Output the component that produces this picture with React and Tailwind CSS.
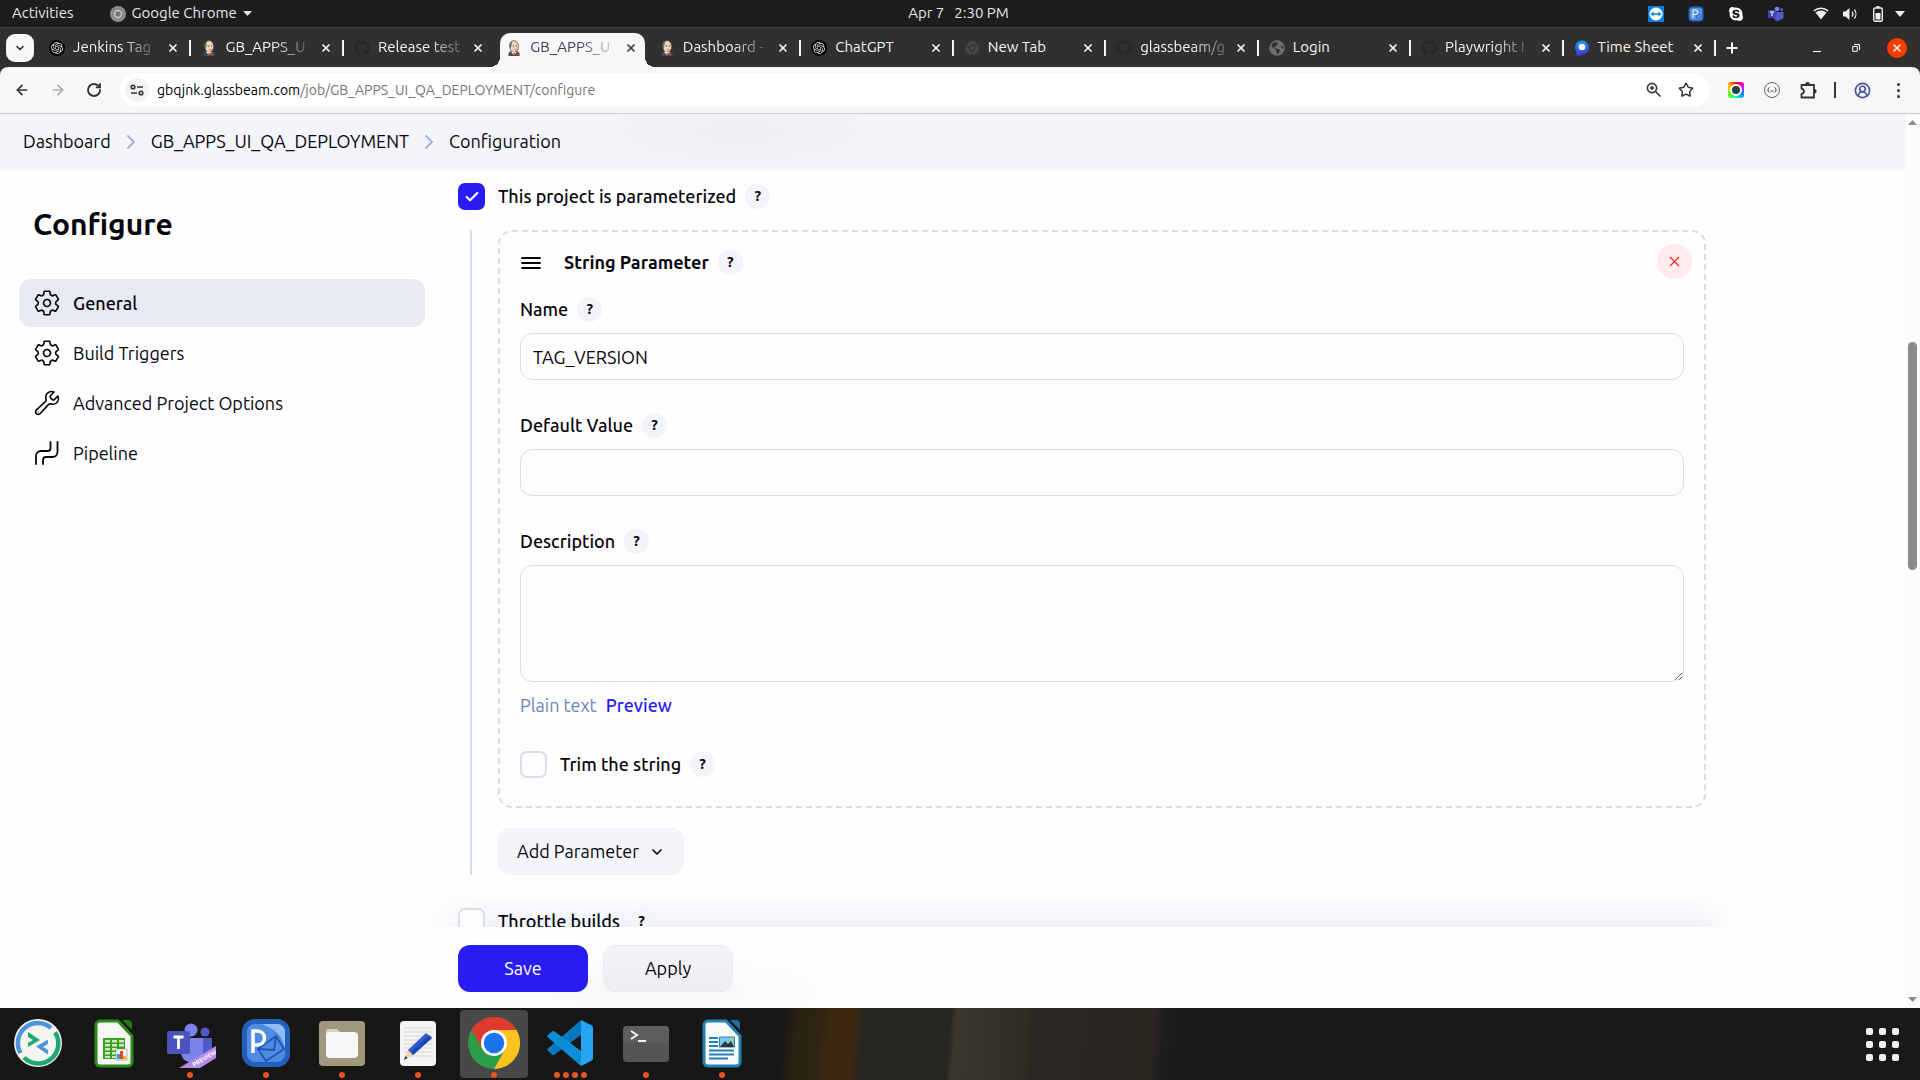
import React from "react";
import { SiOpenai } from "react-icons/si";
import { FaGithub, FaChrome, FaGlobeAmericas, FaSkype } from "react-icons/fa";
import { ArrowLeft, ArrowRight, RotateCw, Check, ChevronDown, X, Star, Plus, CircleUserRound } from "lucide-react";

const FONT = "font-['Ubuntu','Noto_Sans',sans-serif]";

function Henry() {
  return (
    <svg viewBox="0 0 16 16" className="size-4">
      <path d="M2.500 16v-3l2.500-2h6l2.500 2v3z" fill="#335061" />
      <ellipse cx="8.200" cy="6.500" rx="4.400" ry="5.900" fill="#efd3b3" stroke="#4a4340" strokeWidth=".7" />
      <path d="M4.200 8.500C2.600 5 3.600 1.600 6.500 .8 5.800 2 5.400 3.600 5.600 5.200c-.3 1-.6 2-1.400 3.300z" fill="#6d6a68" />
      <path d="M6.800 6h1.300M9.800 6h1.200" stroke="#3b3532" strokeWidth=".9" />
      <path d="M8.300 9.600c.9.600 1.800.5 2.500 0" stroke="#8a4a34" strokeWidth=".7" fill="none" />
      <path d="M5 11.800l2.500 3h1.500l2-2.300z" fill="#fff" />
      <path d="M7.500 12.500l2 1 2.300-1.200v3.500l-2.300-1-2 1z" fill="#d33833" />
    </svg>
  );
}

const favicons = {
  gpt: (
    <span className="grid size-4 place-items-center rounded-full bg-black">
      <SiOpenai className="size-3 text-gray-200" />
    </span>
  ),
  henry: <Henry />,
  github: <FaGithub className="size-4 text-[#24292e]" />,
  chrome: <FaChrome className="size-[14px] text-[#43474b]" />,
  globe: <FaGlobeAmericas className="size-4 text-[#6b6e74]" />,
  sheet: (
    <svg viewBox="0 0 16 16" className="size-4">
      <defs>
        <linearGradient id="sheet" x1="0" y1="0" x2="0" y2="1">
          <stop offset="0" stopColor="#13a0ea" />
          <stop offset="1" stopColor="#3a33d6" />
        </linearGradient>
      </defs>
      <path d="M8 .5a7 7 0 0 1 0 14c-1.500 1.300-4.500 1.300-6.200 1 .8-1 1-2.300.4-4A7 7 0 0 1 8 .5z" fill="url(#sheet)" />
      <circle cx="8" cy="7" r="3.300" fill="#fff" />
    </svg>
  ),
};

const tabs = [
  { icon: "gpt", title: "Jenkins Tag", fade: true },
  { icon: "henry", title: "GB_APPS_U", fade: true },
  { icon: "github", title: "Release test", fade: true },
  { icon: "henry", title: "GB_APPS_U", fade: true },
  { icon: "henry", title: "Dashboard -", fade: true },
  { icon: "gpt", title: "ChatGPT" },
  { icon: "chrome", title: "New Tab" },
  { icon: "github", title: "glassbeam/g", fade: true },
  { icon: "globe", title: "Login" },
  { icon: "github", title: "Playwright I", fade: true },
  { icon: "sheet", title: "Time Sheet" },
];

function SystemBar() {
  return (
    <header className="flex h-7 shrink-0 items-center border-b border-[#444] bg-[#1d1d1d] text-[15px] text-gray-200">
      <div className="flex flex-1 items-center gap-9 pl-3">
        <button>Activities</button>
        <button className="flex items-center gap-[6px]">
          <span className="grid size-4 place-items-center rounded-full bg-[#8b8b8b]">
            <span className="size-2 rounded-full border border-gray-200 bg-[#777]" />
          </span>
          Google Chrome
          <svg viewBox="0 0 9 5" className="h-[5px] w-[9px]"><path d="M0 0h9L4.500 5z" fill="currentColor" /></svg>
        </button>
      </div>
      <div className="flex gap-[10px]"><span>Apr 7</span><span>2:30 PM</span></div>
      <div className="flex flex-1 items-center justify-end pr-[15px]">
        <svg viewBox="0 0 16 16" className="mr-6 size-4">
          <path d="M0 0h16v16H0z" fill="#0a7fe0" /><circle cx="8" cy="8" r="6.500" fill="#fff" />
          <path d="M2.500 8l3-2.500v1.700h5V5.500l3 2.500-3 2.500V8.800h-5v1.700z" fill="#0a7fe0" />
        </svg>
        <svg viewBox="0 0 16 16" className="mr-6 size-4">
          <rect x=".5" y=".5" width="15" height="15" rx="4" fill="#2465bd" /><rect x="2" y="2" width="12" height="12" rx="3" fill="#5b93e2" />
          <path d="M5 12V4h2.500a2 2 0 0 1 0 4.500H5" stroke="#fff" fill="none" /><path d="M8 10l4-2 1.500 3-4 2z" fill="none" stroke="#2465bd" strokeWidth=".8" />
        </svg>
        <FaSkype className="mr-6 size-4 text-white" />
        <svg viewBox="0 0 16 16" className="mr-[29px] size-4">
          <circle cx="9" cy="3" r="2.300" fill="#7b83eb" /><circle cx="13.500" cy="3.700" r="1.600" fill="#5059c9" />
          <path d="M6 6h9.500v4.500a3 3 0 0 1-3 3c-3 3-6.500 1-6.500-2z" fill="#5059c9" /><rect y="4" width="8" height="8" rx="1" fill="#4048b0" />
          <path d="M2 6h4M4 6v4" stroke="#fff" />
        </svg>
        <svg viewBox="0 0 16 13" className="mr-[13px] h-[13px] w-4">
          <path d="M.8 4a11 11 0 0 1 14.400 0" fill="none" stroke="#eee" strokeWidth="1.500" /><path d="M2.500 5.500a9 9 0 0 1 11 0L8 12.500z" fill="#eee" />
        </svg>
        <svg viewBox="0 0 16 14" className="mr-[15px] h-[14px] w-4">
          <path d="M1 4.500h2.500L7.500 1v12l-4-3.500H1z" fill="#eee" /><path d="M10 4.500a4 4 0 0 1 0 5M12.300 2.500a7 7 0 0 1 0 9" fill="none" stroke="#eee" strokeWidth="1.200" />
        </svg>
        <svg viewBox="0 0 10 16" className="mr-3 h-4 w-[10px]">
          <path d="M3.500 0h3v2h-3z" fill="#eee" /><rect x=".7" y="2" width="8.600" height="13.200" rx="1.500" fill="none" stroke="#eee" strokeWidth="1.400" /><path d="M2.500 7h5v6.500h-5z" fill="#eee" />
        </svg>
        <svg viewBox="0 0 10 6" className="h-[6px] w-[10px]"><path d="M0 0h10L5 6z" fill="#eee" /></svg>
      </div>
    </header>
  );
}

function TabStrip() {
  return (
    <div className="flex h-[39px] shrink-0 items-center bg-[#32302f] text-[15px] text-gray-100">
      <button aria-label="Search tabs" className="ml-[6px] grid h-7 w-7 shrink-0 place-items-center rounded-[9px] bg-[#f7f7f7] text-gray-800">
        <ChevronDown className="size-3" strokeWidth={3} />
      </button>
      <div className="ml-[5px] flex h-full min-w-0 flex-1">
        {tabs.map(({ icon, title, fade }, i) => {
          const active = i === 3;
          return (
            <div key={i} className="relative flex h-full min-w-0 flex-1 items-center">
              {active && (
                <div className="absolute inset-x-1 top-[5px] bottom-0 rounded-t-[10px] bg-[#f7f7f7]">
                  <span className="absolute right-[-10px] bottom-0 size-[10px] bg-[radial-gradient(circle_at_100%_0,#32302f_10px,#f7f7f7_10px)]" />
                  <span className="absolute bottom-0 left-[-10px] size-[10px] bg-[radial-gradient(circle_at_0_0,#32302f_10px,#f7f7f7_10px)]" />
                </div>
              )}
              <span className="relative ml-[10px] grid size-4 shrink-0 place-items-center">{favicons[icon]}</span>
              <span className={`relative ml-2 whitespace-nowrap ${active ? "text-gray-700" : ""} ${fade ? "[mask-image:linear-gradient(to_right,black_60%,rgba(0,0,0,0.25))]" : ""}`}>{title}</span>
              <button aria-label={"Close " + title} className="relative mr-3 ml-auto">
                <X className={`size-3 ${active ? "text-gray-700" : "text-gray-100"}`} strokeWidth={3.500} />
              </button>
              {i !== 2 && !active && <span className="absolute right-0 h-4 w-[2px] bg-gray-100" />}
            </div>
          );
        })}
      </div>
      <div className="flex w-[204px] shrink-0 items-center pl-2">
        <button aria-label="New tab"><Plus className="size-4" strokeWidth={3} /></button>
        <button aria-label="Minimize" className="ml-[73px] flex h-4 w-2 items-end pb-[4px]"><span className="h-px w-2 bg-white" /></button>
        <button aria-label="Restore" className="ml-[31px]">
          <svg viewBox="0 0 8 8" className="size-2"><path d="M2 .5h5.500V6M.7 2.500h4.600v4.800H.7z" fill="none" stroke="#fff" /></svg>
        </button>
        <button aria-label="Close window" className="ml-[27px] grid size-5 place-items-center rounded-full bg-[#ff3c00]"><X className="size-3" strokeWidth={3} /></button>
      </div>
    </div>
  );
}

function Toolbar() {
  return (
    <div className="bg-[#32302f]">
      <div className="flex h-[47px] items-center rounded-t-lg border-b border-[#c3c8c0] bg-[#f7f7f7] text-[#333]">
        <button aria-label="Back" className="ml-[14px]"><ArrowLeft className="size-4" strokeWidth={2.500} /></button>
        <button aria-label="Forward" className="ml-5 text-[#aaa]"><ArrowRight className="size-4" strokeWidth={2.500} /></button>
        <button aria-label="Reload" className="ml-5"><RotateCw className="size-4" strokeWidth={2.800} /></button>
        <div className="ml-[18px] flex h-[34px] flex-1 items-center rounded-full bg-white">
          <button aria-label="Site information" className="ml-[5px] grid size-6 place-items-center rounded-full bg-[#f3f3f3]">
            <svg viewBox="0 0 14 12" className="h-3 w-[14px]" fill="none" stroke="#333" strokeWidth="1.600">
              <circle cx="3" cy="3" r="1.800" /><path d="M7 3h6M1 9h6" /><circle cx="11" cy="9" r="1.800" />
            </svg>
          </button>
          <p className="ml-2 flex-1 text-[14px]">
            <span className="text-black">gbqjnk.glassbeam.com</span><span className="text-[#757575]">/job/GB_APPS_UI_QA_DEPLOYMENT/configure</span>
          </p>
          <button aria-label="Zoom">
            <svg viewBox="0 0 16 16" className="size-4" fill="none" stroke="currentColor" strokeWidth="1.600">
              <circle cx="6" cy="6" r="4.600" /><path d="M9.500 9.500l5 5M6 4v4M4 6h4" />
            </svg>
          </button>
          <button aria-label="Bookmark" className="mr-4 ml-4"><Star className="size-4" strokeWidth={2.200} /></button>
        </div>
        <div className="flex w-[210px] items-center pl-[18px]">
          <button aria-label="Color extension" className="grid size-4 place-items-center rounded-[3px] bg-[conic-gradient(red,#f0f,#08f,#0fc,#6f0,#fc0,red)]">
            <span className="size-[12px] rounded-full border-2 border-white bg-[#24404a]" />
          </button>
          <button aria-label="JSON extension" className="ml-5 grid size-4 place-items-center rounded-full border border-[#666]">
            <svg viewBox="0 0 10 6" className="h-[6px] w-[10px]" fill="none" stroke="#444"><path d="M2.500 .5c-1.500 0-.5 2.500-2 2.500 1.500 0 .5 2.500 2 2.500M7.500 .5c1.500 0 .5 2.500 2 2.500-1.500 0-.5 2.500-2 2.500M3.500 4h3" /></svg>
          </button>
          <button aria-label="Extensions" className="ml-5">
            <svg viewBox="0 0 17 17" className="size-[17px]" fill="none" stroke="#333" strokeWidth="1.800" strokeLinejoin="round">
              <path d="M1.500 3h12.500v12.500H1.500v-3.700a2.500 2.500 0 0 0 0-5z" /><path d="M6 2.500a1.500 1.500 0 0 1 3 0zM14.500 8a1.200 1.200 0 0 1 0 2.500z" fill="#333" />
            </svg>
          </button>
          <span className="ml-[17px] h-4 w-[2px] bg-[#333]" />
          <button aria-label="Profile" className="ml-[18px] text-[#4c53a5]"><CircleUserRound className="size-[17px]" strokeWidth={2.400} /></button>
          <button aria-label="Menu" className="ml-[26px] flex flex-col gap-[3px]">
            <span className="size-[3px] rounded-full bg-[#333]" /><span className="size-[3px] rounded-full bg-[#333]" /><span className="size-[3px] rounded-full bg-[#333]" />
          </button>
        </div>
      </div>
    </div>
  );
}

function Gear() {
  return (
    <svg viewBox="0 0 512 512" className="size-7" fill="none" stroke="currentColor" strokeWidth="30" strokeLinecap="round" strokeLinejoin="round">
      <path d="M262.290 192.310a64 64 0 1 0 57.400 57.400 64.130 64.130 0 0 0-57.400-57.400zM416.390 256a154.340 154.340 0 0 1-1.530 20.790l45.210 35.460a10.810 10.810 0 0 1 2.450 13.750l-42.770 74a10.810 10.810 0 0 1-13.140 4.590l-44.900-18.080a16.110 16.110 0 0 0-15.170 1.750A164.480 164.480 0 0 1 325 400.800a15.940 15.940 0 0 0-8.820 12.140l-6.730 47.890a11.080 11.080 0 0 1-10.680 9.170h-85.540a11.110 11.110 0 0 1-10.690-8.870l-6.720-47.820a16.070 16.070 0 0 0-9-12.220 155.300 155.300 0 0 1-21.460-12.570 16 16 0 0 0-15.110-1.710l-44.890 18.070a10.810 10.810 0 0 1-13.140-4.580l-42.770-74a10.800 10.800 0 0 1 2.450-13.750l38.210-30a16.050 16.050 0 0 0 6-14.080c-.36-4.170-.58-8.330-.58-12.500s.21-8.270.58-12.350a16 16 0 0 0-6.070-13.940l-38.190-30A10.810 10.810 0 0 1 49.480 186l42.770-74a10.810 10.810 0 0 1 13.140-4.590l44.900 18.080a16.110 16.110 0 0 0 15.170-1.750A164.480 164.480 0 0 1 187 111.200a15.940 15.940 0 0 0 8.820-12.140l6.730-47.890A11.080 11.080 0 0 1 213.230 42h85.540a11.110 11.110 0 0 1 10.690 8.870l6.720 47.820a16.070 16.070 0 0 0 9 12.220 155.300 155.300 0 0 1 21.460 12.570 16 16 0 0 0 15.110 1.710l44.890-18.070a10.810 10.810 0 0 1 13.140 4.580l42.770 74a10.800 10.800 0 0 1-2.450 13.750l-38.210 30a16.050 16.050 0 0 0-6.050 14.080c.33 4.140.55 8.300.55 12.470z" />
    </svg>
  );
}

function Wrench() {
  return (
    <svg viewBox="0 0 512 512" className="size-7" fill="none" stroke="currentColor" strokeWidth="30" strokeLinecap="round" strokeLinejoin="round">
      <path d="M393.870 190a32.100 32.100 0 0 1-45.250 0l-26.570-26.570a32.090 32.090 0 0 1 0-45.260L382.190 58a1 1 0 0 0-.3-1.640c-38.820-16.640-89.150-8.160-121.110 23.570-30.580 30.350-32.320 76-21.120 115.840a31.930 31.930 0 0 1-9.060 32.080L64 380a48.170 48.170 0 1 0 68 68l153.860-167a31.930 31.930 0 0 1 31.600-9.130c39.540 10.590 84.540 8.600 114.720-21.190 32.490-32 39.500-88.560 23.750-120.930a1 1 0 0 0-1.600-.26z" />
      <circle cx="96" cy="416" r="10" fill="currentColor" stroke="none" />
    </svg>
  );
}

function PipelineIcon() {
  return (
    <svg viewBox="0 0 28 28" className="size-7" fill="none" stroke="currentColor" strokeWidth="1.800" strokeLinecap="round" strokeLinejoin="round">
      <path d="M17.500 3v6a3 3 0 0 1-3 3H8a5 5 0 0 0-5 5v8M24.500 3v10a5 5 0 0 1-5 5H13a3 3 0 0 0-3 3v4" />
    </svg>
  );
}

function Help({ topic }) {
  return (
    <button aria-label={"Help for " + topic} className="grid size-[25px] shrink-0 place-items-center rounded-full bg-[#f3f4f9] text-[15px] font-bold">?</button>
  );
}

function CheckField({ id, label, checked }) {
  return (
    <div className="flex items-center">
      <span className="grid size-[27px] shrink-0">
        <input id={id} type="checkbox" defaultChecked={checked} className="peer col-start-1 row-start-1 size-[27px] appearance-none rounded-[7px] border-2 border-[#d6deeb] bg-[#fdfdfe] checked:border-[#281bf4] checked:bg-[#281bf4]" />
        <Check className="pointer-events-none col-start-1 row-start-1 hidden size-4 place-self-center text-white peer-checked:block" strokeWidth={3.200} />
      </span>
      <label htmlFor={id} className="mr-[9px] ml-[13px] font-medium">{label}</label>
      <Help topic={label} />
    </div>
  );
}

function Field({ id, label, children }) {
  return (
    <div>
      <div className="mb-[11px] flex h-[25px] items-center gap-[9px]">
        <label htmlFor={id} className="font-medium">{label}</label>
        <Help topic={label} />
      </div>
      {children}
    </div>
  );
}

const inputStyle = "block w-full rounded-xl border border-[#d6deeb] bg-[#fdfdfd] px-3";

function Sidebar() {
  const items = [["General", Gear], ["Build Triggers", Gear], ["Advanced Project Options", Wrench], ["Pipeline", PipelineIcon]];
  return (
    <aside className="w-[425px] shrink-0 pl-[19px]">
      <h1 className="mt-[33px] pl-[14px] text-[30px] leading-[40px] font-bold">Configure</h1>
      <nav className="mt-[35px] flex flex-col gap-[2px]">
        {items.map(([name, Icon], i) => (
          <a key={name} href="#" className={`flex h-12 items-center gap-3 rounded-xl pl-[14px] ${i === 0 ? "bg-[#e7e9f3] font-medium" : ""}`}>
            <Icon />
            {name}
          </a>
        ))}
      </nav>
    </aside>
  );
}

function Crumb() {
  return (
    <svg viewBox="0 0 8 14" className="h-[14px] w-2" fill="none" stroke="#a0b2d8" strokeWidth="1.800" strokeLinecap="round" strokeLinejoin="round"><path d="M1 1l6 6-6 6" /></svg>
  );
}

function Page() {
  return (
    <div className="flex min-h-0 flex-1 bg-[#fefefe] text-[18px] text-[#07060f]">
      <div className="flex min-w-0 flex-1 flex-col">
        <nav className="flex h-[57px] shrink-0 items-center gap-4 bg-[#f4f5fa] bg-[radial-gradient(ellipse_170px_42px_at_740px_18px,#eeeff3,#f4f5fa)] pb-[2px] pl-[23px]">
          <a href="#">Dashboard</a>
          <Crumb />
          <a href="#">GB_APPS_UI_QA_DEPLOYMENT</a>
          <Crumb />
          <a href="#">Configuration</a>
        </nav>
        <div className="flex min-h-0 flex-1">
          <Sidebar />
          <main className="ml-[33px] flex min-w-0 max-w-[1248px] flex-1 flex-col">
            <div className="min-h-0 flex-1 overflow-hidden pt-3">
              <CheckField id="param" label="This project is parameterized" checked />
              <div className="mt-5 ml-3 border-l-2 border-[#d6deeb] pl-[26px]">
                <section className="relative rounded-[14px] border-2 border-dashed border-[#d6deeb] px-5 pb-7">
                  <div className="flex h-[61px] items-center">
                    <svg viewBox="0 0 20 14" className="mx-px h-[14px] w-5" stroke="currentColor" strokeWidth="1.800" strokeLinecap="round"><path d="M1 2h18M1 7h18M1 12h18" /></svg>
                    <h2 className="mr-[9px] ml-[22px] font-bold">String Parameter</h2>
                    <Help topic="String Parameter" />
                  </div>
                  <button aria-label="Delete parameter" className="absolute top-[12px] right-[12px] grid size-[35px] place-items-center rounded-full bg-[#ffebeb] text-[#fe1f1f]">
                    <X className="size-[17px]" strokeWidth={1.600} />
                  </button>
                  <div className="mt-1 flex flex-col gap-[33px]">
                    <Field id="name" label="Name"><input id="name" defaultValue="TAG_VERSION" className={inputStyle + " h-[47px]"} /></Field>
                    <Field id="default" label="Default Value"><input id="default" className={inputStyle + " h-[47px]"} /></Field>
                    <Field id="desc" label="Description">
                      <textarea id="desc" className={inputStyle + " h-[117px] resize"} />
                      <p className="mt-[10px] flex items-center gap-[9px] leading-[26px] text-[#6b84b8]">
                        Plain text <a href="#" className="font-medium text-[#281bf4]">Preview</a>
                      </p>
                    </Field>
                    <CheckField id="trim" label="Trim the string" />
                  </div>
                </section>
                <button className="mt-5 flex h-[47px] items-center gap-[10px] rounded-xl border border-[#f0f1f5] bg-[#f4f5fa] px-[18px]">
                  Add Parameter <ChevronDown className="size-4" strokeWidth={2.500} />
                </button>
              </div>
              <div className="relative z-10 mt-[33px]"><CheckField id="throttle" label="Throttle builds" /></div>
            </div>
            <div className="relative flex h-[81px] shrink-0 items-start gap-[15px] bg-[radial-gradient(ellipse_220px_44px_at_190px_64px,#f7f7f8,#fefefe)] pt-[18px]">
              <div className="pointer-events-none absolute -inset-x-[30px] bottom-full h-[37px] bg-gradient-to-b from-transparent to-[#e2e8f4]/50 [mask-image:linear-gradient(to_right,transparent,black_40px,black_calc(100%_-_40px),transparent)]" />
              <button className="h-[47px] w-[130px] rounded-xl bg-[#281bf4] text-white">Save</button>
              <button className="h-[47px] w-[130px] rounded-xl border border-[#ebecf1] bg-gradient-to-b from-[#f3f4f9] to-[#ededf2]">Apply</button>
            </div>
          </main>
        </div>
      </div>
      <div className="flex w-[15px] shrink-0 flex-col items-center bg-[#fcfcfc] py-[6px]">
        <svg viewBox="0 0 9 5" className="h-[5px] w-[9px]"><path d="M0 5h9L4.500 0z" fill="#8b8b8b" /></svg>
        <div className="flex w-[9px] flex-1 flex-col">
          <span className="grow-[217]" /><span className="grow-[227] rounded-full bg-[#8b8b8b]" /><span className="grow-[427]" />
        </div>
        <svg viewBox="0 0 9 5" className="h-[5px] w-[9px]"><path d="M0 0h9L4.500 5z" fill="#8b8b8b" /></svg>
      </div>
    </div>
  );
}

const dockIcons = [
  [0, "Connect", (
    <>
      <circle cx="24" cy="24" r="24" fill="#f4f4f0" />
      <path d="M6.500 34A20 20 0 0 1 37 9" fill="none" stroke="#4b95df" strokeWidth="4.500" />
      <path d="M41 13.500A20 20 0 0 1 10 38.500" fill="none" stroke="#1fa971" strokeWidth="4.500" />
      <path d="M14 13l12 8-12 7v-4l5-3-5-3z" fill="#1fa971" />
      <path d="M34 20.500l-12 7 12 8v-4.500l-5-3 5-3z" fill="#4b95df" />
    </>
  )],
  [0, "Calc", (
    <>
      <path d="M10 2h18l14 15v26a4 4 0 0 1-4 4H10a4 4 0 0 1-4-4V6a4 4 0 0 1 4-4z" fill="#f6f6f6" stroke="#2d8a18" strokeWidth="3" />
      <path d="M32 1h6a4 4 0 0 1 4 4v6z" fill="#1f7a12" />
      <path d="M13 19h22v21H13z" fill="#3d9e22" /><path d="M15 21h5v2.500h-5zM22 21h5v2.500h-5zM29 21h5v2.500h-5zM15 25h5v2.500h-5zM22 25h5v2.500h-5zM29 25h5v2.500h-5zM15 29h5v2.500h-5zM22 29h5v2.500h-5zM15 33h5v2.500h-5zM22 33h5v2.500h-5zM15 37h5v2h-5zM22 37h5v2h-5z" fill="#cfe9b8" />
      <path d="M26 30h11v11H26z" fill="#f5f0ee" stroke="#888" strokeWidth=".6" /><path d="M27 35h3v5h-3z" fill="#2b9be0" /><path d="M30 32h3v8h-3z" fill="#d9501e" /><path d="M33 37h3v3h-3z" fill="#f0b400" />
    </>
  )],
  [1, "Teams", (
    <>
      <circle cx="25" cy="11" r="6.500" fill="#7b83eb" /><circle cx="39" cy="13" r="4.500" fill="#5059c9" />
      <path d="M30 19h16v14a8 8 0 0 1-8 8h-8z" fill="#5059c9" /><path d="M16 19h21v14c0 14-22 14-22 0z" fill="#7b83eb" />
      <rect x="1" y="12" width="23" height="23" rx="2" fill="#4b53bc" /><path d="M7.500 18h10M12.500 18v12" stroke="#fff" strokeWidth="2.800" />
      <path d="M13 49l37-22v12L34 49z" fill="#b48be6" />
      <text x="28" y="48" fontSize="6" fontWeight="700" fill="#fff" transform="rotate(-31 28 48)">PREVIEW</text>
    </>
  )],
  [1, "Mail", (
    <>
      <rect width="48" height="48" rx="13" fill="#2161bd" /><rect x="5" y="5" width="38" height="38" rx="8" fill="#508be0" />
      <path d="M20 5h15a8 8 0 0 1 8 8v16C40 15 32 10 20 5z" fill="#8fbcf5" />
      <path d="M16 30l18-13 8 13-18 12zM16 30l16 1 2-14" fill="none" stroke="#1b57b5" strokeWidth="1.800" />
      <path d="M11 34V12h4c10 0 10 14 0 14h-4" fill="none" stroke="#fff" strokeWidth="3.500" />
    </>
  )],
  [1, "Files", (
    <>
      <rect x="1" y="2" width="46" height="45" rx="4" fill="#a0977f" />
      <path d="M8 13a3 3 0 0 1 3-3h8l4 4h9v10H8z" fill="#d9d3c4" /><rect x="8" y="13" width="32" height="26" rx="4" fill="#f8f7f5" />
    </>
  )],
  [1, "Text Editor", (
    <>
      <rect x="6" y="2" width="36" height="45" rx="4" fill="#f4f4f4" />
      <path d="M10 9h28M10 13h28M10 17h28M10 21h28M10 25h28M10 29h28M10 33h28M10 37h28" stroke="#d4d4d4" />
      <path d="M10 41l4-10 5 5z" fill="#f2cfa5" /><path d="M10 41l1.500-4 2 2z" fill="#222" />
      <path d="M14 31l18-17 6 5-19 17z" fill="#2e5bd7" /><path d="M17 33l18-17 3 3-19 17z" fill="#2046b0" />
    </>
  )],
  [1, "Chrome", (
    <>
      <circle cx="24" cy="24" r="24" fill="#2c9c48" />
      <path d="M3.200 12A24 24 0 0 1 44.800 12H24l-10.400 18z" fill="#e03a2e" />
      <path d="M24 12h20.800A24 24 0 0 1 24 48l10.400-18z" fill="#fcc31e" />
      <circle cx="24" cy="24" r="12" fill="#fff" /><circle cx="24" cy="24" r="9.500" fill="#1a73e8" />
    </>
  )],
  [4, "VS Code", (
    <>
      <path d="M1.500 31.500l4.500 4a2 2 0 0 0 2.500 0L35 16V1L1.500 30a1 1 0 0 0 0 1.500z" fill="#0878be" />
      <path d="M1.500 16.500l4.500-4a2 2 0 0 1 2.500 0L35 32v15L1.500 18a1 1 0 0 1 0-1.500z" fill="#0d8fd8" />
      <path d="M35 1l10 5a3 3 0 0 1 2 2.700v30.600a3 3 0 0 1-2 2.700l-10 5z" fill="#27a5f2" />
    </>
  )],
  [1, "Terminal", (
    <>
      <rect x="1" y="7" width="46" height="36" rx="4" fill="#555" /><path d="M1 11a4 4 0 0 1 4-4h38a4 4 0 0 1 4 4v13H1z" fill="#5e5e5e" />
      <path d="M9 12l6 4-6 4M16 22h8" fill="none" stroke="#f5f5f5" strokeWidth="2" />
    </>
  )],
  [1, "Writer", (
    <>
      <path d="M10 2h18l14 15v26a4 4 0 0 1-4 4H10a4 4 0 0 1-4-4V6a4 4 0 0 1 4-4z" fill="#fafafa" stroke="#2480b5" strokeWidth="3" />
      <path d="M32 1h6a4 4 0 0 1 4 4v6z" fill="#1c6f9f" />
      <path d="M11 19h9M11 23h9M11 27h9M11 31.500h25M11 35.500h25M11 39.500h19" stroke="#2480b5" strokeWidth="2" />
      <path d="M21.500 18h15v10h-15z" fill="#7cc5ef" stroke="#2480b5" /><path d="M22 28l5-6 3 3 3-3 3 6z" fill="#333" /><circle cx="34" cy="20.500" r="1.500" fill="#f5c02c" />
    </>
  )],
];

function Dock() {
  return (
    <footer className="flex h-[72px] shrink-0 items-center bg-[#181818] bg-[linear-gradient(95deg,#171716_40.800%,#2a2314_41.400%,#2e2513_42.600%,#3c2810_43.200%,#3c2810_44.400%,#272621_44.900%,#272621_49.400%,#3a372d_49.700%,#312d24_53.400%,#2b2722_53.700%,#2b2520_60%,#1d1e1d_60.500%,#18191b_61.500%)] px-1">
      <nav className="flex flex-1 gap-2">
        {dockIcons.map(([dots, name, art]) => (
          <button key={name} aria-label={name} className={`relative grid h-[68px] w-[68px] place-items-center rounded pb-[2px] ${name === "Chrome" ? "bg-[#484848]" : ""}`}>
            <svg viewBox="0 0 48 48" className={`overflow-visible ${name === "Chrome" ? "size-[52px]" : "size-12"}`}>{art}</svg>
            <span className="absolute bottom-0 flex gap-[3px]">
              {Array.from({ length: dots }, (_, i) => <span key={i} className="size-[6px] rounded-full bg-[#e95420]" />)}
            </span>
          </button>
        ))}
      </nav>
      <button aria-label="Show applications" className="mr-[17px] grid grid-cols-3 gap-[6px]">
        {Array.from({ length: 9 }, (_, i) => <span key={i} className="size-[7px] rounded-[2px] bg-[#f0f0ee]" />)}
      </button>
    </footer>
  );
}

export default function App() {
  return (
    <div className={`flex h-screen flex-col overflow-hidden ${FONT}`}>
      <SystemBar />
      <TabStrip />
      <Toolbar />
      <Page />
      <Dock />
    </div>
  );
}
